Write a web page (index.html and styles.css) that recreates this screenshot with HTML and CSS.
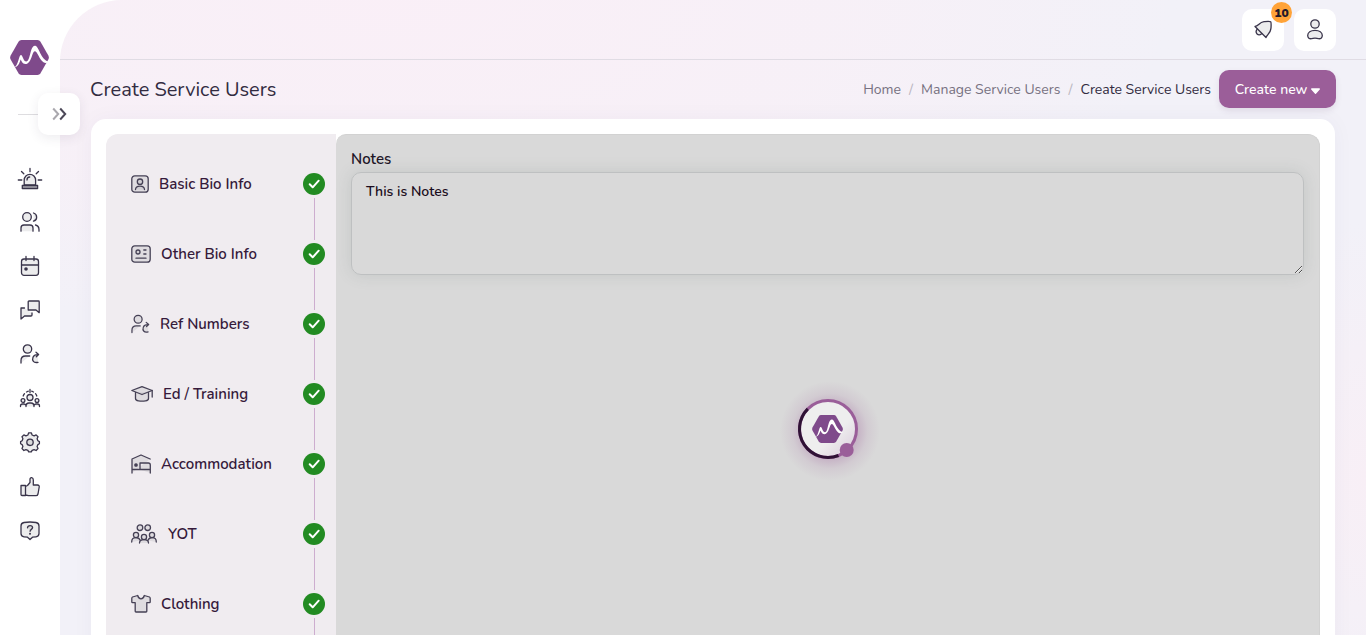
FILE: index.html
```html
<!DOCTYPE html>
<html lang="en">
<head>
<meta charset="utf-8">
<title>Create Service Users</title>
<link rel="stylesheet" href="styles.css">
</head>
<body>
<svg width="0" height="0" class="defs">
  <symbol id="logo" viewBox="0 0 39 35"><path d="M11.500 0h16q2 0 3 1.700l7.700 13.500q1.300 2.300 0 4.600l-7.700 13.500q-1 1.700-3 1.700h-16q-2 0-3-1.700L.8 19.800q-1.300-2.300 0-4.600L8.500 1.700Q9.500 0 11.500 0z" fill="#7f4a8b"/><path d="M4.500 27.200C8.500 25.500 8.800 14.500 11 15c1.700.4 2.300 5.500 4.300 6.300 1.700.6 3-.8 3.800-3.500 1.800-5.500 2.300-12.500 6.200-12.100 3.700.5 5.200 14 13.500 16-2.300 1.800-4.600 1.700-6.800-.7-3.500-3.800-4.700-9.700-7.200-9.800-2.900 0-3.100 13-9.400 12.800-3 0-3.900-3-4.800-4.500-1.100 4-3 7.900-6.100 7.700z" fill="#fff"/></symbol>
  <symbol id="person-arrow" viewBox="0 0 20 20"><circle cx="7.500" cy="5" r="4.200"/><path d="M1 19v-2.500Q1 12 5.500 12h4.200M18 18.300c-4.500 1-6.200-1.800-5-5 .7-1.900 2.500-2.700 5-2.600M16 8.300l2.600 2.300-2.300 2.200"/></symbol>
</svg>
<div class="shell">
  <aside class="sidebar">
    <svg class="logo" width="39" height="35"><use href="#logo"/></svg>
    <div class="rule"><button class="toggle"><svg width="15" height="14" viewBox="0 0 15 14"><path d="M1.200 1.500L6.200 7l-5 5.500" stroke="#aaa8ae"/><path d="M8.200 1.500L13.200 7l-5 5.500" stroke="#4c4858"/></svg></button></div>
    <nav class="nav">
      <svg class="ic siren" width="24" height="22" viewBox="0 0 24 22"><path d="M6.200 17v-5a5.700 5.700 0 0111.400 0v5z"/><path class="base" d="M4.300 17.500h15.300v3H4.300z"/><path d="M9 12c0-1.800 1-3 2.700-3M12 .5v3.200M3.500 3.500l2.300 2.300M20.500 3.500l-2.300 2.300M.3 12h3.500M20.200 12h3.500"/></svg>
      <svg class="ic" width="20" height="20" viewBox="0 0 20 20"><circle cx="7" cy="5" r="4.300"/><path d="M1 19.200V16q0-3 3-3h6q3 0 3 3v3.200M13.500 1c4.200 1.300 4.200 7 0 8.200M15.500 13c2 .5 3.500 2.300 3.500 4.500v1.700"/></svg>
      <svg class="ic" width="20" height="20" viewBox="0 0 20 20"><rect x="1.500" y="3" width="17" height="16.300" rx="2.500"/><path d="M1.500 9h17M6 .5v4M14 .5v4"/><circle class="dot" cx="6" cy="13" r="1.800"/></svg>
      <svg class="ic" width="20" height="20" viewBox="0 0 20 20"><path d="M9 1h9.500q.7 0 .7.700v11L16 10H8.200V1.700Q8.200 1 9 1z"/><path d="M4.500 8H1v11l3.500-3H11q1 0 1-1v-2"/></svg>
      <svg class="ic" width="20" height="20"><use href="#person-arrow"/></svg>
      <svg class="ic" width="20" height="20" viewBox="0 0 20 20"><circle cx="10" cy="9.500" r="3"/><circle cx="3" cy="12.500" r="1.900"/><circle cx="17" cy="12.500" r="1.900"/><path d="M.5 18.500v-.5q0-2 2-2h1.500q1.500 0 2 1.500M14 17.500q.5-1.500 2-1.500h1.500q2 0 2 2v.5M6 18.500q0-3.500 3-3.500h2q3 0 3 3.500M3.200 8q.5-1.500 1.300-2.300M6.500 4l1.800-.8M11.700 3.200l1.800.8M15.500 5.700Q16.400 6.800 16.800 8M10 1.500v3"/></svg>
      <svg class="ic" width="20" height="20" viewBox="0 0 20 20"><path d="M8.700.8h2.600l.8 2.200 2 .8 2-.9 1.900 1.900-.9 2 .8 2 1.500.8v2.200l-1.500.8-.8 2 .9 2-1.900 1.900-2-.9-2 .8-.8 1.500H8.700l-.8-1.500-2-.8-2 .9L2 16.600l.9-2-.8-2-1.500-.8V9.600l1.500-.8.8-2-.9-2L3.900 2.900l2 .9 2-.8z"/><circle cx="10" cy="10.300" r="3.200"/></svg>
      <svg class="ic low" width="20" height="20" viewBox="0 0 20 20"><path d="M1 8.500h4.500v10H2q-1 0-1-1zM5.500 9.500l2-1 2.500-3V2q.3-1.500 1.700-1.300Q13.300 1 13.300 3v5h4.200q2 .2 1.700 2l-1.200 7q-.5 1.700-2 1.700H8.500l-3-.7z"/></svg>
      <svg class="ic low" width="20" height="20" viewBox="0 0 20 20"><path d="M4 1.500Q10 .5 16 1.500q3 .5 3 3.500v7.500q0 3-3 3.300l-3.500.4L10 18.500l-2.500-2.300-3.500-.4q-3-.3-3-3.300V5q0-3 3-3.500z"/><path d="M7.500 6.800q.2-2.200 2.600-2.200t2.500 2c0 1.900-2.500 1.700-2.500 3.700"/><circle class="solid" cx="10" cy="12.800" r=".4"/></svg>
    </nav>
  </aside>
  <main class="main">
    <header class="topbar">
      <button class="tile"><svg class="ic" width="20" height="20" viewBox="0 0 20 20"><path d="M2 6.500L13 17.500c.7-2.300 4.800-4.500 5-9.500.1-2 .4-5.500-.3-6.200C16.500 1 13 1.500 11 1.700 6 2.200 5.500 6.300 2 6.500z"/><path d="M4.200 9.200c-2.900 3.800 1 7.300 4.500 4.500"/></svg><span class="badge">10</span></button>
      <button class="tile"><svg class="ic" width="20" height="24" viewBox="0 0 20 24"><circle cx="10" cy="6" r="4.200"/><path d="M10 12.300c4.300 0 7.300 2.200 7.300 5.200 0 2.500-1.800 3.500-3.800 3.200-1.500-.8-5.500-.8-7 0-2 .3-3.800-.7-3.800-3.200 0-3 3-5.200 7.300-5.200z"/></svg></button>
    </header>
    <div class="heading">
      <h1>Create Service Users</h1>
      <div class="crumbs"><span>Home</span><i>/</i><span>Manage Service Users</span><i>/</i><span class="current">Create Service Users</span></div>
      <button class="create"><span>Create new</span><svg width="9" height="6"><path d="M.7 1h7.600L4.500 5.200z" fill="#fff" stroke="#fff" stroke-width="1.300" stroke-linejoin="round"/></svg></button>
    </div>
    <section class="card">
      <div class="steps">
        <div class="step"><svg class="ic" width="18" height="18" viewBox="0 0 18 18"><rect x=".8" y=".8" width="16.400" height="16.400" rx="3"/><circle cx="9" cy="6.700" r="2.700"/><path d="M4.500 14.500c.3-4.500 8.700-4.500 9 0"/></svg><span>Basic Bio Info</span><b class="check"></b></div>
        <div class="step"><svg class="ic" width="20" height="18" viewBox="0 0 20 18"><rect x=".8" y=".8" width="18.400" height="16.400" rx="3"/><circle cx="7" cy="7" r="2"/><path d="M12.800 5H15M12.800 9H15M5 13.200h10"/></svg><span>Other Bio Info</span><b class="check"></b></div>
        <div class="step"><svg class="ic" width="19" height="20"><use href="#person-arrow"/></svg><span>Ref Numbers</span><b class="check"></b></div>
        <div class="step"><svg class="ic" width="22" height="18" viewBox="0 0 22 18"><path d="M.8 5.500L11 1.700l10.200 3.800L11 9.500z"/><path d="M4.500 7.500v6q0 2 3 2.300 3.500.5 7 0 3-.3 3-2.300v-6M21.200 5.500V12"/></svg><span>Ed / Training</span><b class="check"></b></div>
        <div class="step"><svg class="ic" width="20" height="20" viewBox="0 0 20 20"><path d="M1 19V5l9-4 9.200 4M1 15.500h18.300M19.300 19v-8q0-2-2-2H9v6.500"/><circle class="solid" cx="5" cy="11" r="1.200"/></svg><span>Accommodation</span><b class="check"></b></div>
        <div class="step"><svg class="ic" width="26" height="20" viewBox="0 0 26 20"><circle cx="9" cy="3.700" r="2.800"/><circle cx="16.700" cy="3.700" r="2.800"/><circle cx="5" cy="11" r="2.600"/><circle cx="21" cy="11" r="2.600"/><circle cx="13" cy="13" r="2.600"/><path d="M.7 18c0-3.200 1.300-4.400 4.300-4.400s3.700 1 4.300 3M25.300 18c0-3.200-1.300-4.400-4.300-4.400s-3.500 1-4.100 3M8.500 19c0-2.400 1.700-3.400 4.500-3.400s4.500 1 4.500 3.400"/></svg><span class="yot">YOT</span><b class="check"></b></div>
        <div class="step"><svg class="ic" width="20" height="20" viewBox="0 0 20 20"><path d="M6.700 1.500L1.500 3Q.7 3.500.8 4.500V8q0 .7.700.7h2.700v8.500q0 .8.800.8h10q.8 0 .8-.8V8.700h2.700q.7 0 .7-.7V4.500Q19.300 3.500 18.500 3l-5.200-1.500Q12.500 4.800 10 4.800T6.700 1.500z"/></svg><span>Clothing</span><b class="check"></b></div>
        <div class="step"></div>
      </div>
      <div class="pane">
        <label for="notes">Notes</label>
        <textarea id="notes">This is Notes</textarea>
        <div class="loader"><svg width="110" height="110" viewBox="0 0 110 110"><defs><linearGradient id="disc" x1="0" y1="0" x2="1" y2="1"><stop offset=".6" stop-color="#eee"/><stop offset="1" stop-color="#d9c8da"/></linearGradient><radialGradient id="glow"><stop offset=".5" stop-color="#9b5e99" stop-opacity=".36"/><stop offset=".75" stop-color="#9b5e99" stop-opacity=".11"/><stop offset="1" stop-color="#9b5e99" stop-opacity="0"/></radialGradient></defs><circle cx="57" cy="57" r="50" fill="url(#glow)"/><circle cx="55" cy="55" r="28.500" fill="url(#disc)"/><circle cx="55" cy="55" r="28.500" fill="none" stroke="#9a5e99" stroke-width="3"/><path d="M65.500 81.500A28.500 28.500 0 0134.800 34.900" fill="none" stroke="#2f1235" stroke-width="3"/><use href="#logo" x="39" y="41" width="31" height="28"/><circle cx="73.700" cy="76" r="7" fill="#9a5e99"/></svg></div>
      </div>
    </section>
  </main>
</div>
<script>
document.querySelectorAll('.check').forEach(function (c) {
  c.innerHTML = '<svg width="22" height="22" viewBox="0 0 22 22"><circle cx="11" cy="11" r="11" fill="#228b22"/><path d="M6.700 11.300l3 3 6-6.600" fill="none" stroke="#fff" stroke-width="2" stroke-linecap="round" stroke-linejoin="round"/></svg>';
});
</script>
</body>
</html>
```
FILE: styles.css
```css
* { box-sizing: border-box; }
body { margin: 0; height: 635px; overflow: hidden; background: #fff; color: #322c41; font-family: Nunito, Lato, sans-serif; font-size: 15px; }
button { border: 0; padding: 0; font: inherit; }
.defs { position: absolute; }
.shell { display: flex; height: 635px; }
.ic { fill: rgba(70, 65, 80, .1); stroke: #39344a; stroke-width: 1.3; stroke-linecap: round; stroke-linejoin: round; flex: none; overflow: visible; }
.ic .solid { fill: #39344a; }
.ic .dot { fill: #39344a; stroke: none; }
.ic .base { fill: #aaa8b0; }
.sidebar { width: 60px; flex: none; padding-top: 40px; display: flex; flex-direction: column; align-items: center; }
.logo { margin-right: 1px; flex: none; }
.rule { width: 60px; height: 42px; margin-top: 18px; flex: none; position: relative; background: linear-gradient(#dedde0, #dedde0) 18px 21px / 24px 1px no-repeat; }
.toggle { position: absolute; left: 38px; top: 0; z-index: 3; width: 42px; height: 42px; border-radius: 10px; background: #fff; box-shadow: 0 3px 12px rgba(50, 40, 80, .09); display: flex; align-items: center; justify-content: center; }
.toggle svg { fill: none; stroke-width: 2; }
.nav { margin-top: 21px; display: grid; grid-auto-rows: 44px; place-items: center; }
.siren, .low { margin-top: 1px; }
.main { width: 1306px; height: 635px; border-top-left-radius: 62px; padding: 0 30px; background: radial-gradient(ellipse 800px 340px at 320px 0, rgba(250, 239, 247, .95), rgba(248, 240, 247, .8) 60%, rgba(243, 242, 249, 0)), radial-gradient(ellipse 140px 260px at 1306px 480px, #f8eff6, rgba(249, 239, 246, 0)), #f2f1f8; }
.topbar { height: 60px; margin: 0 -30px; padding: 9px 30px 0; border-bottom: 1px solid #e0dce4; display: flex; justify-content: flex-end; gap: 10px; }
.tile { position: relative; width: 42px; height: 42px; border-radius: 10px; background: #fff; display: flex; align-items: center; justify-content: center; }
.badge { position: absolute; right: -8px; top: -7px; width: 21px; height: 21px; border-radius: 50%; background: #ffa338; color: #21182a; font-size: 12px; font-weight: 900; line-height: 22px; text-align: center; }
.heading { height: 59px; padding-bottom: 1px; display: flex; align-items: center; }
h1 { margin: 1px auto 0 0; font-size: 20px; line-height: 30px; font-weight: 400; }
.crumbs { display: flex; align-items: center; font-size: 14px; color: #777181; }
.crumbs i { font-style: normal; color: #bab6c0; width: 20px; text-align: center; }
.crumbs .current { color: #322c41; }
.create { margin-left: 8px; width: 117px; height: 38px; border-radius: 10px; background: #9b5e99; color: #fff; font-size: 14px; font-weight: 500; display: flex; align-items: center; justify-content: center; gap: 4px; box-shadow: 0 3px 6px rgba(80, 40, 90, .1); }
.create svg { margin-top: 3px; overflow: visible; }
.card { margin-left: 1px; width: 1244px; height: 540px; padding: 15px 15px 0; display: flex; border-radius: 15px; background: #fff; box-shadow: 0 0 22px rgba(60, 50, 110, .04); }
.steps { width: 230px; height: 501px; padding: 15px 11px 0 25px; background: #f0ecf0; border-radius: 12px 0 0; overflow: hidden; }
.step { height: 70px; display: flex; align-items: center; gap: 10px; color: #361a3b; font-size: 15px; font-weight: 600; }
.step .ic { opacity: .93; }
.check { margin-left: auto; width: 22px; height: 70px; display: flex; align-items: center; background: linear-gradient(#cdadcf, #cdadcf) 11px 49px / 1px 21px no-repeat, linear-gradient(#cdadcf, #cdadcf) 11px 0 / 1px 21px no-repeat; }
.step:first-child .check { background: linear-gradient(#cdadcf, #cdadcf) 11px 49px / 1px 21px no-repeat; }
.step:last-child::after { content: ""; align-self: stretch; width: 1px; margin: 0 10px 0 auto; background: #cdadcf; }
.yot { margin-left: 1px; }
.pane { position: relative; width: 984px; height: 501px; padding: 14px 16px 0 15px; background: #d9d9d9; border: solid #d2d2d2; border-width: 1px 1px 0 0; border-radius: 10px 12px 0 0; }
label { display: block; height: 23px; line-height: 20px; color: #211527; font-weight: 600; }
textarea { display: block; width: 953px; height: 103px; padding: 10px 14px; border: 1px solid #bec0c1; border-radius: 10px; background: transparent; color: #1b0d20; font: 600 14px/17px Nunito, Lato, sans-serif; outline: 0; box-shadow: 0 0 16px rgba(80, 100, 95, .15); }
.loader { position: absolute; left: 437px; top: 239px; width: 110px; height: 110px; }
```
